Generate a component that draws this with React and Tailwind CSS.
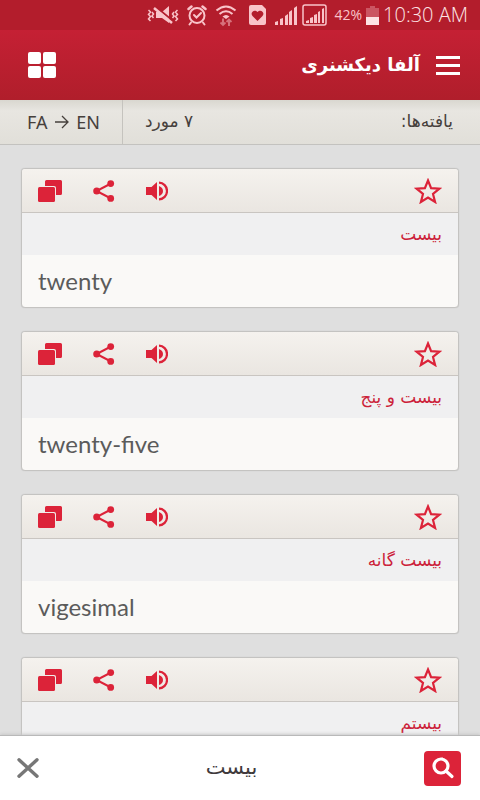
import React from "react";

const entries = [
  { term: "بیست", meaning: "twenty" },
  { term: "بیست و پنج", meaning: "twenty-five" },
  { term: "بیست گانه", meaning: "vigesimal" },
  { term: "بیستم" },
];

const persian = "font-['DejaVu_Sans',sans-serif]";

function VibrateIcon() {
  return (
    <svg width="32" height="20" viewBox="0 0 32 20" fill="none" stroke="currentColor" strokeWidth="1.500" aria-hidden="true">
      <path d="M1.500 5l2 2-2 2.500 2 2-2 2.500 2 2M5 7l1.500 2L5 11l1.500 2M30.500 5l-2 2 2 2.500-2 2 2 2.500-2 2M27 7l-1.500 2 1.500 2-1.500 2" />
      <path d="M9 7h6l7-6v17l-7-5H9z" fill="currentColor" stroke="none" />
      <path d="M9 2l17 14" stroke="#b31d2c" strokeWidth="2" />
      <path d="M7 3l18 15" strokeWidth="2.500" />
    </svg>
  );
}

function AlarmIcon() {
  return (
    <svg width="20" height="22" viewBox="0 0 20 22" fill="none" stroke="currentColor" strokeWidth="2" strokeLinecap="round" aria-hidden="true">
      <circle cx="10" cy="11.500" r="7.500" />
      <path d="M1.500 5L4.500 2.500M15.500 2.500l3 2.500" strokeWidth="2.500" />
      <path d="M4 18.500l-1.500 2M16 18.500l1.500 2M7 11l2.500 2.500L14 9" />
    </svg>
  );
}

function WifiIcon() {
  return (
    <svg width="22" height="24" viewBox="0 0 22 24" fill="none" stroke="currentColor" strokeWidth="2" aria-hidden="true">
      <path d="M1.500 7.500Q11-.5 20.500 7.500M4.500 11q6.500-5.500 13 0" />
      <path d="M7.500 13.500q3.500-3 7 0L11 16z" fill="currentColor" stroke="none" />
      <g opacity=".5">
        <path d="M8 15.500v6M14 23v-6" />
        <path d="M5.500 19.500L8 22l2.500-2.500M11.500 19l2.500-2.500 2.500 2.500" strokeWidth="1.800" />
      </g>
    </svg>
  );
}

function HealthIcon() {
  return (
    <svg width="18" height="20" viewBox="0 0 18 20" aria-hidden="true">
      <path d="M2 0h11l4 4v14a2 2 0 0 1-2 2H2a2 2 0 0 1-2-2V2a2 2 0 0 1 2-2z" fill="currentColor" />
      <path d="M8.500 16L3.500 11C.5 7.500 5.500 3.500 8.500 7c3-3.500 8 .5 5 4z" fill="#b31d2c" />
    </svg>
  );
}

function SignalIcon() {
  return (
    <svg width="23" height="21" viewBox="0 0 23 21" fill="currentColor" aria-hidden="true">
      <path d="M0 20v-3l3-1v4zM5 20v-6l3-1v7zM10 20v-9l3-2v11zM14 20V7l3-2v15zM19 20V3l3-2v19z" />
    </svg>
  );
}

function BoxedSignalIcon() {
  return (
    <svg width="25" height="22" viewBox="0 0 25 22" fill="currentColor" aria-hidden="true">
      <rect x="1" y="1" width="23" height="20" rx="2" fill="none" stroke="currentColor" strokeWidth="1.500" />
      <path d="M4 19v-2l3-1v3zM8 19v-5l3-1v6zM12 19v-8l3-1v9zM16 19V8l2-1v12zM20 19V5l2-1v15z" />
    </svg>
  );
}

function BatteryIcon() {
  return (
    <svg width="13" height="19" viewBox="0 0 13 19" fill="currentColor" aria-hidden="true">
      <path d="M4 0h5v2h4v9H0V2h4z" opacity=".35" />
      <path d="M0 11h13v8H0z" fill="#fde3e4" />
    </svg>
  );
}

function CopyIcon() {
  return (
    <svg width="24" height="22" viewBox="0 0 24 22" fill="currentColor" aria-hidden="true">
      <path d="M7 6V1.500Q7 0 8.500 0h14Q24 0 24 1.500v12q0 1.500-1.500 1.500H18V8q0-2-2-2z" />
      <rect x="0" y="7" width="17" height="15" rx="1.500" />
    </svg>
  );
}

function ShareIcon() {
  return (
    <svg width="22" height="22" viewBox="0 0 22 22" fill="currentColor" aria-hidden="true">
      <path d="M18 3.500L3.500 11 18 18.500" fill="none" stroke="currentColor" strokeWidth="2" />
      <circle cx="3.700" cy="11" r="3.500" />
      <circle cx="17.700" cy="3.600" r="3.400" />
      <circle cx="17.700" cy="18.400" r="3.400" />
    </svg>
  );
}

function SpeakerIcon() {
  return (
    <svg width="22" height="20" viewBox="0 0 22 20" fill="currentColor" aria-hidden="true">
      <path d="M0 6h5.500L11 1v18l-5.500-5H0zM13 5q4 1.500 4 5t-4 5z" />
      <path d="M13 1.700a8 8.300 0 0 1 0 16.600" fill="none" stroke="currentColor" strokeWidth="2.200" />
    </svg>
  );
}

function StarIcon() {
  return (
    <svg width="28" height="26" viewBox="0 0 28 26" fill="none" stroke="currentColor" strokeWidth="2.200" aria-hidden="true">
      <path d="M14 2.500l3.100 7.700 8.300.5-6.400 5.300 2.100 8-7.100-4.400-7.100 4.400 2.100-8-6.400-5.300 8.300-.5z" />
    </svg>
  );
}

function SearchIcon() {
  return (
    <svg width="24" height="22" viewBox="0 0 24 22" fill="none" stroke="currentColor" strokeWidth="3.200" strokeLinecap="round" aria-hidden="true">
      <circle cx="10" cy="9" r="7" />
      <path d="M15 14l6 5.500" />
    </svg>
  );
}

function CloseIcon() {
  return (
    <svg width="22" height="20" viewBox="0 0 22 20" fill="none" stroke="currentColor" strokeWidth="3.400" strokeLinecap="round" aria-hidden="true">
      <path d="M2 1.800l18 16.400M20 1.800L2 18.200" />
    </svg>
  );
}

function StatusBar() {
  return (
    <div className="flex h-[30px] shrink-0 items-center justify-end bg-[#b31d2c] pr-3 text-[#f9c4c9]">
      <VibrateIcon />
      <span className="ml-2"><AlarmIcon /></span>
      <span className="ml-2"><WifiIcon /></span>
      <span className="ml-3"><HealthIcon /></span>
      <span className="ml-2"><SignalIcon /></span>
      <span className="ml-1"><BoxedSignalIcon /></span>
      <span className="ml-2 font-['Open_Sans',sans-serif] text-sm">42%</span>
      <span className="ml-1"><BatteryIcon /></span>
      <span className="ml-1 font-['Open_Sans',sans-serif] text-[20px] leading-[30px] font-light text-[#fde3e4]">10:30 AM</span>
    </div>
  );
}

function Header() {
  return (
    <header className="flex h-[70px] shrink-0 items-center justify-between bg-linear-to-b from-[#c52034] to-[#b01e2b] pr-5 pl-7 text-white">
      <button type="button" aria-label="Categories" className="grid grid-cols-2 gap-[2px]">
        <span className="h-3 w-[13px] rounded-[2px] bg-white" />
        <span className="h-3 w-[13px] rounded-[2px] bg-white" />
        <span className="h-3 w-[13px] rounded-[2px] bg-white" />
        <span className="h-3 w-[13px] rounded-[2px] bg-white" />
      </button>
      <div className="flex items-center gap-4">
        <h1 dir="rtl" lang="fa" className={`${persian} text-lg font-bold`}>آلفا دیکشنری</h1>
        <button type="button" aria-label="Menu" className="flex w-6 flex-col gap-[5px]">
          <span className="h-[3px] bg-white" />
          <span className="h-[3px] bg-white" />
          <span className="h-[3px] bg-white" />
        </button>
      </div>
    </header>
  );
}

function ResultBar() {
  return (
    <div className="flex h-[45px] shrink-0 items-stretch border-b border-[#c3c2bf] bg-linear-to-b from-[#d9d7d0] via-[#e8e6e1] via-25% to-[#e1dfd9] text-[#46403c]">
      <div className="flex w-[123px] items-center justify-between border-r border-[#c5c3be] pr-[22px] pl-[27px] font-['Noto_Sans',sans-serif] text-lg">
        <span>FA</span>
        <svg width="14" height="14" viewBox="0 0 14 14" fill="none" stroke="currentColor" strokeWidth="1.300" aria-label="to">
          <path d="M0 7h13M7 1l6 6-6 6" />
        </svg>
        <span>EN</span>
      </div>
      <div dir="ltr" className={`${persian} flex flex-1 items-center justify-between pr-[27px] pl-[22px] text-[17px]`}>
        <span dir="rtl" lang="fa">۷ مورد</span>
        <span dir="rtl" lang="fa">یافته‌ها:</span>
      </div>
    </div>
  );
}

function EntryCard({ term, meaning }) {
  return (
    <article className="shrink-0 overflow-hidden rounded border border-[#c4c3c1] bg-[#faf9f7] shadow-[0_0_1px_#bbb]">
      <div className="flex h-11 items-center justify-between border-b border-[#c9c5c1] bg-linear-to-b from-[#f5f2ee] to-[#eae6e1] px-4 text-[#dc2339]">
        <div className="flex items-center gap-[31px]">
          <button type="button" aria-label="Copy"><CopyIcon /></button>
          <button type="button" aria-label="Share"><ShareIcon /></button>
          <button type="button" aria-label="Listen"><SpeakerIcon /></button>
        </div>
        <button type="button" aria-label="Favourite"><StarIcon /></button>
      </div>
      <h2 dir="rtl" lang="fa" className={`${persian} h-[42px] bg-[#f0f0f1] px-4 text-[17px] leading-[42px] text-[#cc1f3a]`}>{term}</h2>
      {meaning && <p lang="en" className="h-[52px] px-4 font-['Lato',sans-serif] text-2xl leading-[52px] text-[#5b5b5b]">{meaning}</p>}
    </article>
  );
}

function SearchBar() {
  return (
    <form className="flex h-[65px] shrink-0 items-center border-t border-[#b9b9b9] bg-white pr-[19px] pl-[17px] shadow-[0_-1px_3px_#c8c8c8]" onSubmit={(e) => e.preventDefault()}>
      <button type="button" aria-label="Clear" className="text-[#777]"><CloseIcon /></button>
      <input type="text" dir="rtl" lang="fa" aria-label="Search" defaultValue="بیست" className={`${persian} min-w-0 flex-1 bg-transparent text-center text-[21px] text-[#403a3c] outline-none`} />
      <button type="submit" aria-label="Search" className="flex h-[35px] w-[37px] items-center justify-center rounded bg-[#dc2339] text-white"><SearchIcon /></button>
    </form>
  );
}

export default function App() {
  return (
    <div className="flex h-screen flex-col overflow-hidden bg-[#dfdfdf]">
      <StatusBar />
      <Header />
      <ResultBar />
      <main className="flex min-h-0 flex-1 flex-col gap-[23px] overflow-hidden px-[21px] pt-[23px]">
        {entries.map((entry) => <EntryCard key={entry.term} {...entry} />)}
      </main>
      <SearchBar />
    </div>
  );
}
